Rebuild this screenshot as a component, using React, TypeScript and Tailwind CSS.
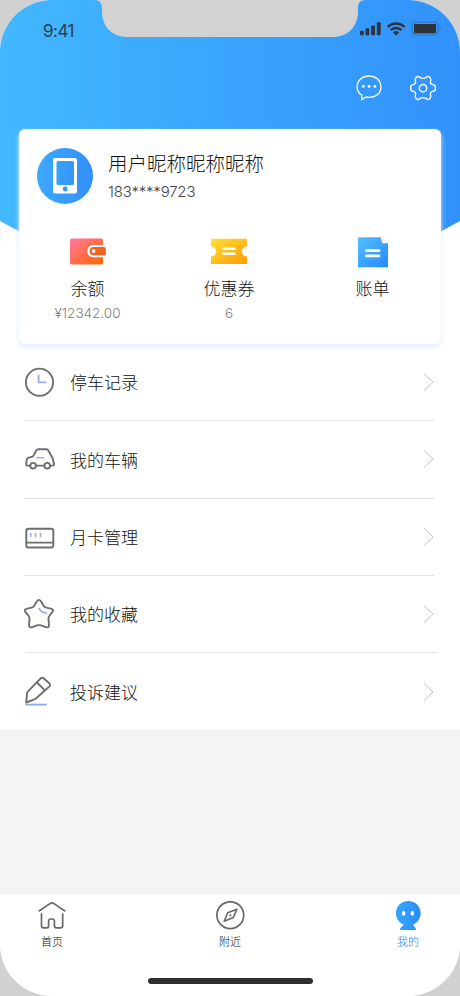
import type { ReactNode } from 'react';

const stats = [
  { label: '余额', value: '¥12342.00', icon: <WalletIcon />, className: 'ml-0' },
  { label: '优惠券', value: '6', icon: <CouponIcon />, className: 'ml-[1px]' },
  { label: '账单', value: '', icon: <BillIcon />, className: 'ml-[3px]' },
];

const menu = [
  { label: '停车记录', icon: <ClockIcon /> },
  { label: '我的车辆', icon: <CarIcon /> },
  { label: '月卡管理', icon: <CardIcon /> },
  { label: '我的收藏', icon: <StarIcon /> },
  { label: '投诉建议', icon: <PenIcon /> },
];

function WalletIcon() {
  return (
    <svg width="36" height="32" viewBox="0 0 36 32">
      <defs>
        <linearGradient id="wallet" x1="0" y1="0" x2="1" y2="1">
          <stop offset="0" stopColor="#ff78a0" />
          <stop offset="0.6" stopColor="#ff6b3d" />
          <stop offset="1" stopColor="#ff6a00" />
        </linearGradient>
      </defs>
      <path
        fill="url(#wallet)"
        d="M2 2.500h29q2 0 2 2V9h-9.800a6.100 6.100 0 0 0 0 12.200H33v5.300q0 2-2 2H2q-2 0-2-2v-22q0-2 2-2z"
      />
      <path fill="#f9601c" d="M23.700 11.100H34q1.800 0 1.800 1.800v4.500q0 1.800-1.800 1.800H23.700a4 4 0 0 1 0-8.100z" />
      <circle cx="23.600" cy="15.100" r="1.900" fill="#fff" />
    </svg>
  );
}

function CouponIcon() {
  return (
    <svg width="36" height="32" viewBox="0 0 36 32">
      <defs>
        <linearGradient id="coupon" x1="0" y1="0" x2="1" y2="1">
          <stop offset="0" stopColor="#ffe135" />
          <stop offset="1" stopColor="#ff9b00" />
        </linearGradient>
      </defs>
      <path fill="url(#coupon)" d="M0 2.700h36v7.500a5.200 5.200 0 0 0 0 10.400v7.400H0v-7.400a5.200 5.200 0 0 0 0-10.400z" />
      <path d="M11.500 12.700h13M11.500 17.800h13" stroke="#fff" strokeWidth="2.400" />
    </svg>
  );
}

function BillIcon() {
  return (
    <svg width="30" height="32" viewBox="0 0 30 32">
      <defs>
        <linearGradient id="bill" x1="0" y1="0" x2="1" y2="1">
          <stop offset="0" stopColor="#55c0ff" />
          <stop offset="1" stopColor="#2589ff" />
        </linearGradient>
      </defs>
      <path fill="url(#bill)" d="M0 1.200h22.500l2 6.100H30v23.900H0z" />
      <path d="M7.300 14.700h14.900M7.300 19.900h14.900" stroke="#fff" strokeWidth="2.700" />
    </svg>
  );
}

function MenuSvg({ children }: { children: ReactNode }) {
  return (
    <svg
      width="32"
      height="32"
      viewBox="0 0 32 32"
      fill="none"
      stroke="#6c6e6f"
      strokeWidth="1.900"
      strokeLinecap="round"
      strokeLinejoin="round"
    >
      {children}
    </svg>
  );
}

function ClockIcon() {
  return (
    <MenuSvg>
      <circle cx="15.500" cy="16.200" r="13.600" />
      <path d="M14.600 8.500v7.800h7.900" stroke="#92ade8" strokeWidth="1.800" strokeLinecap="butt" strokeLinejoin="miter" />
    </MenuSvg>
  );
}

function CarIcon() {
  return (
    <MenuSvg>
      <path d="M6 22.600H3.300Q2 22.600 2.100 21l.7-4.600q.2-1.200 1.300-1.500l4.300-1.300q.8-.2 1.200-1l2.700-5.200Q13 6.300 14.400 6.300h8q1.300 0 1.900 1.200l4 7.200q.5.900.7 2l1 4.400q.1 1.500-1.200 1.500h-2.500" />
      <path d="M12.200 22.600h7.900" />
      <circle cx="9.100" cy="22.700" r="2.800" />
      <circle cx="23.200" cy="22.700" r="2.800" />
      <path d="M12.900 14.700h6.500" stroke="#a4a9ec" strokeWidth="1.600" />
    </MenuSvg>
  );
}

function CardIcon() {
  return (
    <MenuSvg>
      <rect x="2.300" y="7.700" width="27" height="18.800" rx="2" />
      <path d="M2.300 21.600h27" />
      <path d="M6.700 12.500v3M11.600 12.500v3M16.500 12.500v3" stroke="#a4a9ec" strokeWidth="1.700" />
    </MenuSvg>
  );
}

function StarIcon() {
  return (
    <MenuSvg>
      <path d="M13.200 3.100q1.800-2.400 3.600 0l3 5q.6 1 1.700 1.300l6 1.500q2.400.8 1 2.900l-3.300 4.400q-.8 1.100-.7 2.300l.5 6.700q-.1 2.600-2.600 2.100l-5.400-1.900q-2-.6-4 0l-5.400 1.900q-2.400.5-2.600-2.100l.5-6.700q.1-1.200-.7-2.300l-3.500-4.400q-1.400-2 1-2.900l6-1.500q1.100-.3 1.700-1.300z" />
      <path d="M15.300 10.500q1.500 3.900 7 4.400" stroke="#92a9ec" strokeWidth="1.700" />
    </MenuSvg>
  );
}

function PenIcon() {
  return (
    <MenuSvg>
      <path d="m2.200 26.500.9-9.200q.1-1.100.9-1.900L16.400 2.700q1.900-1.700 3.800 0l5 4.500q1.700 1.700 0 3.400L12.200 22.300q-.5.500-1.200.8zM13.200 6.800l7.700 7.600" />
      <path d="M1.300 28.600h21.400" stroke="#86a8f5" strokeWidth="1.800" strokeLinecap="butt" />
    </MenuSvg>
  );
}

function StatusIcons() {
  return (
    <svg width="83" height="16" viewBox="0 0 83 16" fill="#2d3339">
      <rect x="1" y="9.700" width="3.800" height="4.600" rx="1" />
      <rect x="6.500" y="7.200" width="3.800" height="7.100" rx="1" />
      <rect x="12.200" y="4.400" width="3.800" height="9.900" rx="1" />
      <rect x="17.900" y="1.200" width="3.800" height="13.100" rx="1" />
      <g fill="none" stroke="#2d3339" strokeWidth="2.400">
        <path d="M28.600 6a12.200 12.200 0 0 1 17 0" />
        <path d="M31.700 9.200a7.700 7.700 0 0 1 10.800 0" />
      </g>
      <path d="M34 11.400a4.500 4.500 0 0 1 6.200 0l-3.100 3z" />
      <rect x="53" y="1" width="26" height="13" rx="3.500" fill="none" stroke="#2d3339" strokeOpacity="0.35" />
      <rect x="55" y="3" width="22" height="9.200" rx="1.200" />
      <path d="M80.500 5q2.600 2.500 0 5z" fillOpacity="0.25" />
    </svg>
  );
}

function Notch() {
  return (
    <svg className="absolute top-0 left-[94px]" width="272" height="38" viewBox="0 0 272 38">
      <path
        fill="#d2d2d2"
        d="M0 0c6 0 8 3 8 9v2c0 16 10 26 26 26h204c16 0 26-10 26-26V8c0-5 2-8 8-8z"
      />
    </svg>
  );
}

function HeaderActions() {
  return (
    <div className="flex justify-end gap-7 pr-6 pt-[33px]">
      <svg width="26" height="26" viewBox="0 0 26 26" fill="none" stroke="#fff" strokeWidth="1.300" strokeLinejoin="round">
        <path d="M5.800 20.200C2.700 18.300 1.100 15.500 1.100 12 1.100 5.600 6.200 1 13 1s11.900 4.600 11.900 11S20 22.300 13 22.300q-1.500 0-3-.3l-4.200 2.600z" />
        <g fill="#fff" stroke="none">
          <circle cx="7.300" cy="11.400" r="1.400" />
          <circle cx="13.100" cy="11.400" r="1.400" />
          <circle cx="18.900" cy="11.400" r="1.400" />
        </g>
      </svg>
      <svg width="26" height="26" viewBox="0 0 26 26" fill="none" stroke="#fff" strokeWidth="1.400" strokeLinejoin="round">
        <path d="M6.200 2.400q1.100-1.400 2.600-.7l2 1.200q2.200 1 4.400 0l2-1.200q1.500-.7 2.600.7l.8 1.400q.5 1-.1 2.400-.7 2.700 2.200 3.400 2.600.4 2.600 2.200v2.400q0 1.800-2.600 2.200-2.900.7-2.200 3.400.6 1.400.1 2.400l-.8 1.400q-1.100 1.400-2.600.7l-2-1.200q-2.200-1-4.400 0l-2 1.200q-1.500.7-2.600-.7l-.8-1.400q-.5-1 .1-2.400.7-2.700-2.200-3.400Q.7 16 .7 14.200v-2.400q0-1.800 2.600-2.200 2.900-.7 2.200-3.400-.6-1.400-.1-2.400z" />
        <circle cx="13" cy="13.200" r="3.700" />
      </svg>
    </div>
  );
}

function Avatar() {
  return (
    <div className="flex h-14 w-14 items-center justify-center rounded-full bg-gradient-to-r from-[#3ba8fb] to-[#338ff9]">
      <svg width="24" height="36" viewBox="0 0 24 36">
        <path
          fill="#fff"
          fillRule="evenodd"
          d="M2 0h20q2 0 2 2v31.500q0 2-2 2H2q-2 0-2-2V2q0-2 2-2zm3 3q-1.500 0-1.500 1.500v21Q3.500 27 5 27h14.500q1.500 0 1.500-1.500v-21Q21 3 19.500 3z"
        />
        <circle cx="12.200" cy="31" r="2.400" fill="#3598f8" />
      </svg>
    </div>
  );
}

function TabBar() {
  return (
    <nav className="relative flex h-[102px] justify-between bg-white px-[30px] pt-[6px] text-[11px] leading-4 text-[#111]">
      <div className="flex w-11 flex-col items-center gap-[4px]">
        <svg width="30" height="30" viewBox="0 0 30 30" fill="none" stroke="#686868" strokeWidth="1.700" strokeLinejoin="round">
          <path d="m1.700 11.300 11.300-7.700q2-1.300 4 0l11.300 7.700" />
          <path d="M4.500 13.300v12.500q0 2 2 2h3.300q1.800 0 1.800-2v-4.600q0-2.200 2.200-2.200h1.400q2.200 0 2.200 2.200v4.600q0 2 1.800 2h4.500q2 0 2-2V13.300" />
        </svg>
        首页
      </div>
      <div className="flex w-11 flex-col items-center gap-[4px]">
        <svg width="30" height="30" viewBox="0 0 30 30" fill="none" stroke="#686868" strokeWidth="1.700" strokeLinejoin="round">
          <circle cx="15.300" cy="15.200" r="13.400" />
          <path d="m21.900 9.200-9.200 3.500-3.500 8.600 9.200-3.900z" strokeWidth="1.600" />
          <circle cx="15.300" cy="15.400" r="1.100" fill="#686868" stroke="none" />
        </svg>
        附近
      </div>
      <div className="flex w-11 flex-col items-center gap-[4px] text-[#1f87f5]">
        <svg width="30" height="30" viewBox="0 0 30 30">
          <defs>
            <linearGradient id="me">
              <stop offset="0" stopColor="#35a6fb" />
              <stop offset="1" stopColor="#2c8df5" />
            </linearGradient>
          </defs>
          <path
            fill="url(#me)"
            d="M15.300 1C8.400 1 2.900 6.400 2.900 13.200c0 5 3.100 9.200 7.700 11.500-.4 1.800-3.500 1.800-3.600 5.300h16c-.1-3.500-2.600-3.500-3-5.300 4.600-2.300 7.700-6.500 7.700-11.500C27.700 6.400 22.200 1 15.300 1z"
          />
          <rect x="9" y="11" width="3.300" height="4.600" rx="1.600" fill="#fff" />
          <rect x="17.700" y="11" width="3.300" height="4.600" rx="1.600" fill="#fff" />
        </svg>
        我的
      </div>
      <div className="absolute bottom-[12px] left-[148px] h-[6px] w-[165px] rounded-full bg-[#303030]" />
    </nav>
  );
}

export default function App() {
  return (
    <div className="h-[996px] w-[460px] bg-[#d1d1d1] font-['Inter','Noto_Sans_CJK_SC',sans-serif] font-light">
      <div className="relative flex h-full flex-col overflow-hidden rounded-[52px] bg-[#f4f4f4]">
        <div className="bg-white">
          <header className="h-[246px] bg-gradient-to-r from-[#43b7ff] to-[#3291fb] [clip-path:polygon(0_0,100%_0,100%_221px,414px_246px,46px_246px,0_221px)]">
            <div className="flex h-[42px] items-end justify-between pr-[18px] pl-[43px]">
              <span className="text-[17px] leading-[22px] font-normal tracking-[-0.5px] text-[#2d3e4c]">9:41</span>
              <div className="pb-[5px]">
                <StatusIcons />
              </div>
            </div>
            <HeaderActions />
          </header>

          <section className="relative mx-[19px] -mt-[117px] h-[215px] rounded-md bg-white shadow-[0_3px_5px_#deedff]">
            <div className="flex gap-[15px] pt-[19px] pl-[18px]">
              <Avatar />
              <div className="pt-px">
                <h1 className="text-[19.5px] leading-[30px] text-[#111]">用户昵称昵称昵称</h1>
                <p className="mt-[3px] text-[15px] leading-5 tracking-[-0.2px] text-[#444]">183****9723</p>
              </div>
            </div>
            <div className="mt-[32px] flex justify-between px-[27px]">
              {stats.map((item) => (
                <div key={item.label} className={`flex w-[83px] flex-col items-center ${item.className}`}>
                  {item.icon}
                  <span className="mt-[9px] text-[17px] leading-6 text-[#111]">{item.label}</span>
                  <span className="mt-[2px] text-[13.500px] leading-5 text-[#808080]">{item.value}</span>
                </div>
              ))}
            </div>
          </section>

          <ul className="pl-6">
            {menu.map((item, i) => (
              <li
                key={item.label}
                className={`flex h-[77.3px] items-center border-[#e2e2e2] ${i < 4 ? 'border-b' : ''} ${i === 3 ? 'mr-[23px] ml-[2px]' : 'mr-[26px]'}`}
              >
                <div className={i === 3 ? '-ml-[2px]' : ''}>{item.icon}</div>
                <span className="ml-[14px] flex-1 pt-1 text-[17px] text-[#111]">{item.label}</span>
                <svg
                  className={i === 3 ? 'mr-[3px]' : ''}
                  width="12"
                  height="20"
                  viewBox="0 0 12 20"
                  fill="none"
                  stroke="#c4c4c4"
                >
                  <path d="m2 1.500 9 8.500-9 8.500" />
                </svg>
              </li>
            ))}
          </ul>
        </div>
        <div className="flex-1" />
        <TabBar />
        <Notch />
      </div>
    </div>
  );
}
